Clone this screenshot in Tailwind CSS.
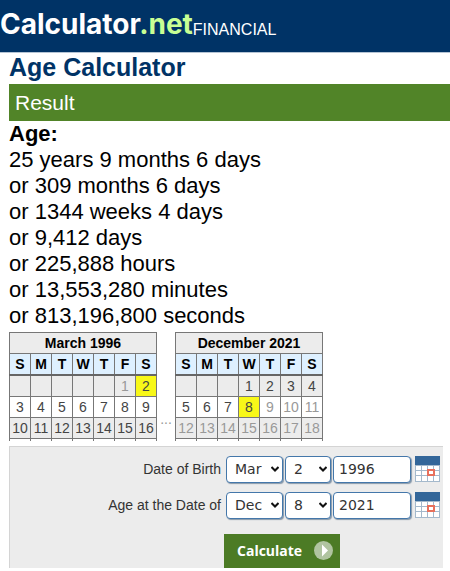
<!DOCTYPE html>
<html lang="en">
  <head>
    <meta charset="UTF-8" />
    <meta name="viewport" content="width=device-width, initial-scale=1.0" />
    <title>Age Calculator</title>
    <script src="https://cdn.jsdelivr.net/npm/@tailwindcss/browser@4"></script>
  </head>
  <body class="bg-white text-black font-['Liberation_Sans',Arial,sans-serif]">
    <!-- Header -->
    <header class="flex items-end h-[53px] bg-[#003366] border-b border-[#b5c4d4] pb-3 text-white">
      <a href="#" class="font-['Inter',sans-serif] font-bold text-[28px] leading-8">Calculator<span class="text-[#c8ff94]">.net</span></a>
      <a href="#" class="text-base leading-5">FINANCIAL</a>
    </header>

    <main class="pl-[9px]">
      <h1 class="pb-0.5 text-[25px] leading-[29px] font-bold text-[#003366]">Age Calculator</h1>

      <!-- Result -->
      <h2 class="bg-[#518428] text-white text-[21px] leading-[37px] px-1.5">Result</h2>
      <div class="text-[22px] leading-[26px]">
        <p class="font-bold">Age:</p>
        <p>25 years 9 months 6 days</p>
        <p>or 309 months 6 days</p>
        <p>or 1344 weeks 4 days</p>
        <p>or 9,412 days</p>
        <p>or 225,888 hours</p>
        <p>or 13,553,280 minutes</p>
        <p>or 813,196,800 seconds</p>
      </div>

      <!-- Calendars -->
      <div class="flex items-end pt-[3px]">
        <table class="table-fixed w-[148px] border-collapse text-center text-sm leading-5 text-[#444] [&_td]:border-x [&_tbody_td]:border-y [&_td]:border-[#777] [&_th]:border [&_th]:border-[#777] [&_td]:p-0 [&_th]:p-0 [&_tbody_td]:h-[21px] [&_th]:h-[21px] [&_tfoot_td]:h-0.5">
          <thead class="text-black">
            <tr class="bg-[#ececec]"><th colspan="7">March 1996</th></tr>
            <tr class="bg-[#def0ff] border-b-2 border-[#666]"><th>S</th><th>M</th><th>T</th><th>W</th><th>T</th><th>F</th><th>S</th></tr>
          </thead>
          <tbody>
            <tr class="bg-[#ececec]"><td></td><td></td><td></td><td></td><td></td><td class="text-[#999]">1</td><td class="bg-[#f8f818]">2</td></tr>
            <tr><td>3</td><td>4</td><td>5</td><td>6</td><td>7</td><td>8</td><td>9</td></tr>
            <tr class="bg-[#ececec]"><td>10</td><td>11</td><td>12</td><td>13</td><td>14</td><td>15</td><td>16</td></tr>
          </tbody>
          <tfoot>
            <tr><td></td><td></td><td></td><td></td><td></td><td></td><td></td></tr>
          </tfoot>
        </table>
        <span class="w-[18px] text-center text-sm leading-4 pb-3.5 text-[#999]">...</span>
        <table class="table-fixed w-[148px] border-collapse text-center text-sm leading-5 text-[#444] [&_td]:border-x [&_tbody_td]:border-y [&_td]:border-[#777] [&_th]:border [&_th]:border-[#777] [&_td]:p-0 [&_th]:p-0 [&_tbody_td]:h-[21px] [&_th]:h-[21px] [&_tfoot_td]:h-0.5">
          <thead class="text-black">
            <tr class="bg-[#ececec]"><th colspan="7">December 2021</th></tr>
            <tr class="bg-[#def0ff] border-b-2 border-[#666]"><th>S</th><th>M</th><th>T</th><th>W</th><th>T</th><th>F</th><th>S</th></tr>
          </thead>
          <tbody>
            <tr class="bg-[#ececec]"><td></td><td></td><td></td><td>1</td><td>2</td><td>3</td><td>4</td></tr>
            <tr><td>5</td><td>6</td><td>7</td><td class="bg-[#f8f818]">8</td><td class="text-[#999]">9</td><td class="text-[#999]">10</td><td class="text-[#999]">11</td></tr>
            <tr class="bg-[#ececec] text-[#999]"><td>12</td><td>13</td><td>14</td><td>15</td><td>16</td><td>17</td><td>18</td></tr>
          </tbody>
          <tfoot>
            <tr><td></td><td></td><td></td><td></td><td></td><td></td><td></td></tr>
          </tfoot>
        </table>
      </div>

      <!-- Form -->
      <form class="mt-[5px] mr-[7px] bg-[#ececec] border-t border-l border-[#d4d4d4] pt-[9px] pr-[3px] text-sm">
        <div class="flex flex-col gap-[9px]">
          <div class="flex items-center justify-end gap-0.5 text-[#333]">
            <label for="birth-month" class="pr-[3px]">Date of Birth</label>
            <span class="grid items-center">
              <select id="birth-month" class="[grid-area:1/1] appearance-none w-[57px] h-[27px] pl-2 bg-white border border-[#4477aa] rounded-sm shadow-[1px_1px_1px_#8899aa] font-['DejaVu_Sans',sans-serif]">
                <option>Mar</option>
              </select>
              <svg class="[grid-area:1/1] justify-self-end mr-1 w-2 h-2 pointer-events-none" viewBox="0 0 8 8" fill="none" stroke="#111" stroke-width="2"><path d="M0.5 2 L4 5.5 L7.5 2" /></svg>
            </span>
            <span class="grid items-center">
              <select aria-label="Birth day" class="[grid-area:1/1] appearance-none w-[46px] h-[27px] pl-2 bg-white border border-[#4477aa] rounded-sm shadow-[1px_1px_1px_#8899aa] font-['DejaVu_Sans',sans-serif]">
                <option>2</option>
              </select>
              <svg class="[grid-area:1/1] justify-self-end mr-1 w-2 h-2 pointer-events-none" viewBox="0 0 8 8" fill="none" stroke="#111" stroke-width="2"><path d="M0.5 2 L4 5.5 L7.5 2" /></svg>
            </span>
            <input type="text" aria-label="Birth year" value="1996" class="w-[78px] h-[27px] px-[5px] bg-white border border-[#4477aa] rounded-sm shadow-[1px_1px_1px_#8899aa] font-['DejaVu_Sans',sans-serif]" />
            <button type="button" aria-label="Pick birth date" class="pl-0.5">
              <svg class="w-[25px] h-[26px]" viewBox="0 0 25 26">
                <rect width="25" height="26" fill="#a4b9cc" />
                <rect width="25" height="9" fill="#336699" />
                <path d="M1 10h5v4H1zM7 10h5v4H7zM13 10h5v4h-5zM19 10h5v4h-5zM1 15h5v4H1zM7 15h5v4H7zM19 15h5v4h-5zM1 20h5v5H1zM7 20h5v5H7zM13 20h5v5h-5zM19 20h5v5h-5z" fill="#fff" />
                <rect x="13" y="14" width="6" height="5" fill="#fff" stroke="#e8705c" stroke-width="2" />
              </svg>
            </button>
          </div>
          <div class="flex items-center justify-end gap-0.5 text-[#333]">
            <label for="age-month" class="pr-[3px]">Age at the Date of</label>
            <span class="grid items-center">
              <select id="age-month" class="[grid-area:1/1] appearance-none w-[57px] h-[27px] pl-2 bg-white border border-[#4477aa] rounded-sm shadow-[1px_1px_1px_#8899aa] font-['DejaVu_Sans',sans-serif]">
                <option>Dec</option>
              </select>
              <svg class="[grid-area:1/1] justify-self-end mr-1 w-2 h-2 pointer-events-none" viewBox="0 0 8 8" fill="none" stroke="#111" stroke-width="2"><path d="M0.5 2 L4 5.5 L7.5 2" /></svg>
            </span>
            <span class="grid items-center">
              <select aria-label="Age at day" class="[grid-area:1/1] appearance-none w-[46px] h-[27px] pl-2 bg-white border border-[#4477aa] rounded-sm shadow-[1px_1px_1px_#8899aa] font-['DejaVu_Sans',sans-serif]">
                <option>8</option>
              </select>
              <svg class="[grid-area:1/1] justify-self-end mr-1 w-2 h-2 pointer-events-none" viewBox="0 0 8 8" fill="none" stroke="#111" stroke-width="2"><path d="M0.5 2 L4 5.5 L7.5 2" /></svg>
            </span>
            <input type="text" aria-label="Age at year" value="2021" class="w-[78px] h-[27px] px-[5px] bg-white border border-[#4477aa] rounded-sm shadow-[1px_1px_1px_#8899aa] font-['DejaVu_Sans',sans-serif]" />
            <button type="button" aria-label="Pick age date" class="pl-0.5">
              <svg class="w-[25px] h-[26px]" viewBox="0 0 25 26">
                <rect width="25" height="26" fill="#a4b9cc" />
                <rect width="25" height="9" fill="#336699" />
                <path d="M1 10h5v4H1zM7 10h5v4H7zM13 10h5v4h-5zM19 10h5v4h-5zM1 15h5v4H1zM7 15h5v4H7zM19 15h5v4h-5zM1 20h5v5H1zM7 20h5v5H7zM13 20h5v5h-5zM19 20h5v5h-5z" fill="#fff" />
                <rect x="13" y="14" width="6" height="5" fill="#fff" stroke="#e8705c" stroke-width="2" />
              </svg>
            </button>
          </div>
        </div>
        <div class="flex justify-end pt-[15px] pr-[100px]">
          <button type="submit" class="flex items-center justify-between w-[116px] h-[34px] pl-[13px] pr-[7px] bg-[#4c7b25] text-white font-bold font-['Open_Sans',sans-serif]">
            Calculate
            <svg class="w-[19px] h-[19px]" viewBox="0 0 19 19">
              <circle cx="9.5" cy="9.5" r="9.5" fill="#b0c4a0" />
              <path d="M8 3.5 L14 9.5 L8 15.5z" fill="#fff" />
            </svg>
          </button>
        </div>
      </form>
    </main>
  </body>
</html>
